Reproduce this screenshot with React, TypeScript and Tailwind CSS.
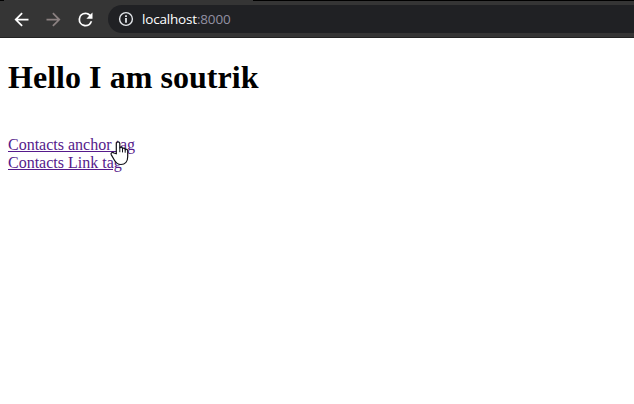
function NavIcon({ d, className }: { d: string; className: string }) {
  return (
    <svg viewBox="0 0 24 24" className={`size-[21px] shrink-0 ${className}`} fill="currentColor" aria-hidden="true">
      <path d={d} />
    </svg>
  );
}

function Toolbar() {
  return (
    <header className="flex h-[38px] items-start border-b border-[#222222] bg-[#353535]">
      <div className="flex shrink-0 gap-[11px] pt-[8.5px] pl-[11px]">
        <NavIcon className="text-white" d="M20 11H7.83l5.59-5.59L12 4l-8 8 8 8 1.41-1.41L7.83 13H20v-2z" />
        <NavIcon className="text-[#8b8181]" d="M12 4l-1.41 1.41L16.17 11H4v2h12.17l-5.58 5.59L12 20l8-8z" />
        <NavIcon
          className="text-white"
          d="M17.65 6.35A7.958 7.958 0 0 0 12 4a8 8 0 1 0 7.73 10h-2.08A6 6 0 1 1 12 6c1.66 0 3.14.69 4.22 1.78L13 11h7V4l-2.35 2.35z"
        />
      </div>
      <div className="mt-[5px] ml-[12px] flex h-[28px] flex-1 items-center rounded-l-full bg-[#202124] pl-[10px]">
        <svg viewBox="0 0 16 16" className="size-4 shrink-0" aria-hidden="true">
          <circle cx="8" cy="8" r="6.4" fill="none" stroke="#e3e6ea" strokeWidth="1.4" />
          <path d="M7.1 4.2h1.8v1.7H7.1zM7.1 7h1.8v4.8H7.1z" fill="#e3e6ea" />
        </svg>
        <span className="ml-2 font-['Open_Sans',sans-serif] text-[13.5px] leading-5 tracking-[-0.18px] whitespace-nowrap text-white">
          localhost<span className="text-[#9290a2]">:8000</span>
        </span>
      </div>
    </header>
  );
}

function HandCursor() {
  return (
    <svg viewBox="0 0 20 26" className="absolute top-[140px] left-[109px] h-[26px] w-5" aria-hidden="true">
      <path
        d="M7.3 13.8V3.3a1.8 1.8 0 0 1 3.5 0v4.5a1.5 1.5 0 0 1 2.7.6v.3a1.5 1.5 0 0 1 2.7.7v.4a1.4 1.4 0 0 1 2.5.8v6.2c0 4.6-2.6 7.7-6.7 7.7-3.5 0-5.2-1.7-6.7-4.5L2.2 14.6c-.8-1.7 1.2-3 2.7-1.6z"
        fill="white"
        stroke="#101018"
        strokeWidth="1.2"
        strokeLinejoin="round"
      />
      <path d="M10.8 7.5v4.7M13.5 8.5v3.9M16.2 9.7v3" fill="none" stroke="#101018" strokeWidth="1" />
    </svg>
  );
}

export default function App() {
  return (
    <div className="relative h-[404px] w-[634px] overflow-hidden bg-white">
      <Toolbar />
      <div className="absolute top-0 left-0 h-px w-[4px] bg-black" />
      <div className="absolute top-0 right-0 h-px w-[381px] bg-black" />
      <main className="px-2 pt-[21px] font-['Liberation_Serif',serif] text-base leading-[18px]">
        <h1 className="text-[32px] leading-[37px] font-bold tracking-[0.04px] text-black">Hello I am soutrik</h1>
        <nav className="mt-10 flex flex-col items-start text-[#551a8b]">
          <a href="#contacts" className="underline">Contacts anchor tag</a>
          <a href="#contacts" className="underline">Contacts Link tag</a>
        </nav>
      </main>
      <HandCursor />
    </div>
  );
}
